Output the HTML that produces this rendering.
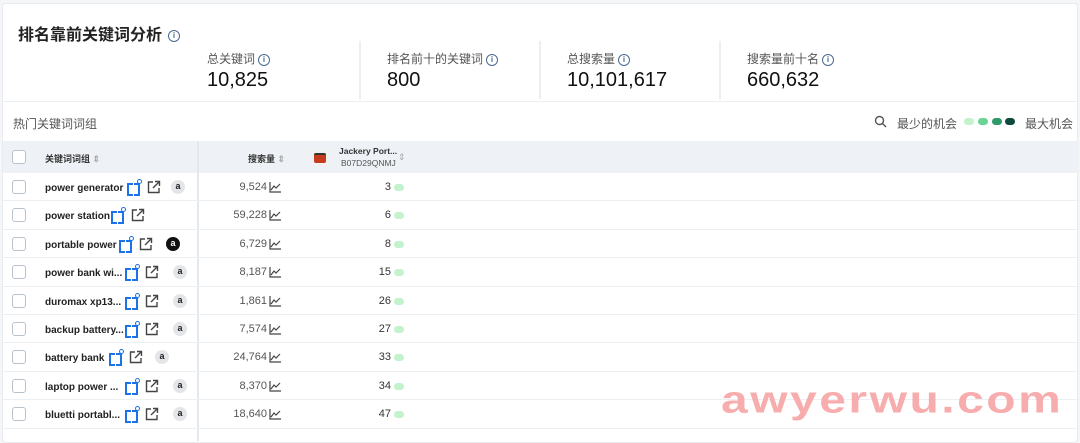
<!DOCTYPE html>
<html><head><meta charset="utf-8"><style>
*{margin:0;padding:0;box-sizing:border-box}
body{width:1080px;height:427px;overflow:hidden;background:#f4f6f8;font-family:"Liberation Sans","Noto Sans CJK SC",sans-serif;color:#222;position:relative}
.card{position:absolute;left:2px;top:3px;width:1076px;height:440px;background:#fff;border:1px solid #e8ecf0;border-radius:4px}
.t{position:absolute}
.info{display:inline-block;width:12px;height:12px;border:1.3px solid #4a6a90;border-radius:50%;font-size:8px;line-height:10px;text-align:center;color:#4a6a90;vertical-align:middle;font-weight:bold;margin-left:3px}
.lab{font-size:12px;color:#555}
.num{font-size:20px;color:#111}
.div{position:absolute;width:2px;background:#eceff2;top:37px;height:58px}
.row{position:absolute;left:0;width:1076px;height:28.4px;border-bottom:1px solid #edf0f3}
.cb{position:absolute;left:9px;top:7px;width:14px;height:14px;border:1px solid #b8c2cc;border-radius:3px;background:#fff}
.kw{position:absolute;left:42px;top:10px;font-size:10px;font-weight:bold;color:#222;line-height:12px}
.sv{position:absolute;right:812px;top:8px;font-size:11px;color:#555}
.rk{position:absolute;right:688px;top:8px;font-size:11px;color:#333}
.pill{position:absolute;left:391px;top:11px;width:10px;height:7px;border-radius:4px;background:#c3f2cc}
.ic{position:absolute;top:7px}
.bi{position:absolute;top:9px;width:14px;height:12px}
.bi:before,.bi:after{content:"";position:absolute;top:1px;width:4px;height:9px;border:2.3px solid #1a73e8}
.bi:before{left:0;border-right:none}
.bi:after{left:7px;border-left:none}
.bi i{position:absolute;left:10px;top:-3px;width:5px;height:5px;border-radius:50%;border:1px solid #1a73e8;background:#fff;z-index:2}
.am{position:absolute;top:7px;width:14px;height:14px;border-radius:50%;background:#e3e5e8;font-size:9px;text-align:center;line-height:13px;color:#222;font-weight:bold}
</style></head><body>
<div class="card">
<div class="t" style="left:15px;top:17px;font-size:16px;font-weight:bold;color:#222">排名靠前关键词分析<span class="info" style="margin-left:6px">i</span></div>
<div class="t lab" style="left:204px;top:46px">总关键词<span class="info">i</span></div>
<div class="t num" style="left:204px;top:65px">10,825</div>
<div class="div" style="left:356px"></div>
<div class="t lab" style="left:384px;top:46px">排名前十的关键词<span class="info">i</span></div>
<div class="t num" style="left:384px;top:65px">800</div>
<div class="div" style="left:536px"></div>
<div class="t lab" style="left:564px;top:46px">总搜索量<span class="info">i</span></div>
<div class="t num" style="left:564px;top:65px">10,101,617</div>
<div class="div" style="left:716px"></div>
<div class="t lab" style="left:744px;top:46px">搜索量前十名<span class="info">i</span></div>
<div class="t num" style="left:744px;top:65px">660,632</div>
<div class="t" style="left:0;top:97px;width:1076px;height:1px;background:#edf0f3"></div>
<div class="t" style="left:10px;top:111px;font-size:12px;color:#555">热门关键词词组</div>
<svg class="t" style="left:871px;top:111px" width="13" height="13"><circle cx="5.5" cy="5.5" r="4" fill="none" stroke="#555" stroke-width="1.4"/><line x1="8.5" y1="8.5" x2="12" y2="12" stroke="#555" stroke-width="1.4"/></svg>
<div class="t" style="left:894px;top:111px;font-size:12px;color:#555">最少的机会</div>
<div class="t" style="left:961px;top:114px;width:10px;height:7px;border-radius:4px;background:#c3f2cc"></div>
<div class="t" style="left:975px;top:114px;width:10px;height:7px;border-radius:4px;background:#6ad495"></div>
<div class="t" style="left:989px;top:114px;width:10px;height:7px;border-radius:4px;background:#2f9a68"></div>
<div class="t" style="left:1002px;top:114px;width:10px;height:7px;border-radius:4px;background:#0d4a3c"></div>
<div class="t" style="left:1022px;top:111px;font-size:12px;color:#555">最大机会</div>
<div class="t" style="left:0;top:137px;width:1076px;height:32px;background:#eef2f6"></div>
<div class="t" style="left:194px;top:137px;width:2px;height:300px;background:#e3e8ee"></div>
<div class="cb" style="top:146px"></div>
<div class="t" style="left:42px;top:148px;font-size:9px;font-weight:bold;color:#333">关键词词组 <span style="color:#aaa">⇕</span></div>
<div class="t" style="left:245px;top:148px;font-size:9px;font-weight:bold;color:#333">搜索量 <span style="color:#aaa">⇕</span></div>
<div class="t" style="left:308px;top:145px;width:18px;height:18px;background:#f1f1f1;border-radius:2px"><div style="margin:4px 3px;width:12px;height:10px;background:#c43c1c;border-radius:2px;border-top:2px solid #333"></div></div>
<div class="t" style="left:336px;top:142px;font-size:8.5px;color:#333;font-weight:bold">Jackery Port...</div>
<div class="t" style="left:338px;top:154px;font-size:8.5px;color:#555">B07D29QNMJ</div>
<div class="t" style="left:395px;top:148px;font-size:9px;color:#aaa">⇕</div>
<div id="rows"></div>
<div class="t" style="left:718px;top:363px;font-size:48px;font-weight:bold;color:#f7a5a5;letter-spacing:2.5px;opacity:.9;transform:scaleY(0.8);transform-origin:left bottom">awyerwu.com</div>
</div>
<script>
var d=[["power generator","9,524",3,122,168],["power station","59,228",6,106,0],["portable power","6,729",8,114,163],["power bank wi...","8,187",15,120,170],["duromax xp13...","1,861",26,120,170],["backup battery...","7,574",27,120,170],["battery bank","24,764",33,104,152],["laptop power ...","8,370",34,120,170],["bluetti portabl...","18,640",47,120,170]];
var h='';
d.forEach(function(r,i){var top=169+i*28.4;
h+='<div class="row" style="top:'+top+'px"><div class="cb"></div><div class="kw">'+r[0]+'</div>'+
'<div class="bi" style="left:'+(r[3]+2)+'px"><i></i></div>'+
'<svg class="ic" style="left:'+(r[3]+22)+'px" width="14" height="14"><path d="M6 2H1.5v10.5H12V8M8 1.5h4.5V6M12.5 1.5L6 8" fill="none" stroke="#444" stroke-width="1.4"/></svg>'+
(r[4]?'<div class="am" style="left:'+r[4]+'px;'+(i==2?'background:#111;color:#fff':'')+'">a</div>':'')+
'<div class="sv">'+r[1]+'</div><svg class="ic" style="left:266px;top:9px" width="12" height="11"><path d="M1 0v10h11M2 8l3-4 2 2 4-4" fill="none" stroke="#444" stroke-width="1.2"/></svg>'+
'<div class="rk">'+r[2]+'</div><div class="pill"></div></div>';});
document.getElementById('rows').innerHTML=h;
</script>
</body></html>
